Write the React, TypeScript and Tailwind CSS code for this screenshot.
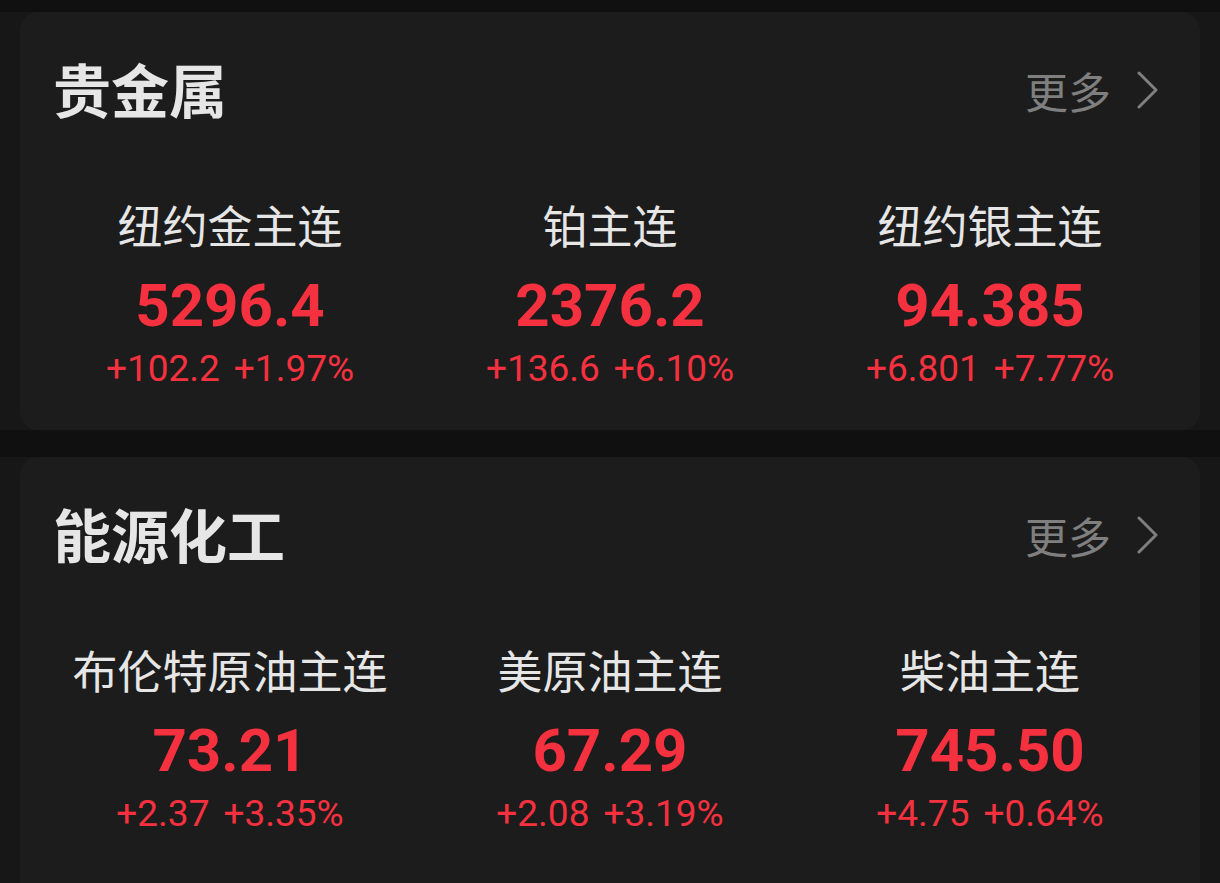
type Quote = { name: string; price: string; change: string; pct: string };

const sections: { title: string; items: Quote[] }[] = [
  {
    title: "贵金属",
    items: [
      { name: "纽约金主连", price: "5296.4", change: "+102.2", pct: "+1.97%" },
      { name: "铂主连", price: "2376.2", change: "+136.6", pct: "+6.10%" },
      { name: "纽约银主连", price: "94.385", change: "+6.801", pct: "+7.77%" },
    ],
  },
  {
    title: "能源化工",
    items: [
      { name: "布伦特原油主连", price: "73.21", change: "+2.37", pct: "+3.35%" },
      { name: "美原油主连", price: "67.29", change: "+2.08", pct: "+3.19%" },
      { name: "柴油主连", price: "745.50", change: "+4.75", pct: "+0.64%" },
    ],
  },
];

const cjk = "font-['Noto_Sans_CJK_SC','Noto_Sans',sans-serif]";
const num = "font-['Roboto','Noto_Sans_CJK_SC',sans-serif]";

function Chevron() {
  return (
    <svg width="22" height="38" viewBox="0 0 22 38" fill="none" className="ml-[26px]">
      <polyline
        points="2,2 19,19 2,36"
        stroke="#7f7f7f"
        strokeWidth="3"
        strokeLinecap="round"
        strokeLinejoin="round"
      />
    </svg>
  );
}

function Section({ title, items, last }: { title: string; items: Quote[]; last?: boolean }) {
  return (
    <div className="bg-[#171717] px-[20px]">
      <div className={`${last ? "h-[470px]" : "h-[418px]"} rounded-[18px] bg-[#1c1c1c]`}>
        {/* header */}
        <div className="flex h-[116px] items-center justify-between pl-[33px] pr-[41px] pt-[36px]">
          <span className={`${cjk} text-[58px] font-bold leading-[76px] text-[#e6e6e6]`}>{title}</span>
          <span className="flex items-center pt-[4px]">
            <span className={`${cjk} text-[43px] leading-[60px] text-[#7f7f7f]`}>更多</span>
            <Chevron />
          </span>
        </div>

        {/* quotes */}
        <div className="grid grid-cols-3 px-[20px]">
          {items.map((it) => (
            <div key={it.name} className="flex flex-col items-center">
              <span className={`${cjk} mt-[72px] text-[45px] leading-[50px] text-[#e6e6e6]`}>{it.name}</span>
              <span className={`${num} mt-[24px] text-[60px] font-bold leading-[64px] text-[#f6313f]`}>
                {it.price}
              </span>
              <span className={`${num} mt-[11px] flex gap-[14px] text-[37px] leading-[40px] text-[#f6313f]`}>
                <span>{it.change}</span>
                <span>{it.pct}</span>
              </span>
            </div>
          ))}
        </div>
      </div>
    </div>
  );
}

export default function App() {
  return (
    <div className="flex h-[883px] w-full flex-col gap-[27px] overflow-hidden bg-[#101010] pt-[12px]">
      {sections.map((s, i) => (
        <Section key={s.title} title={s.title} items={s.items} last={i === sections.length - 1} />
      ))}
    </div>
  );
}
